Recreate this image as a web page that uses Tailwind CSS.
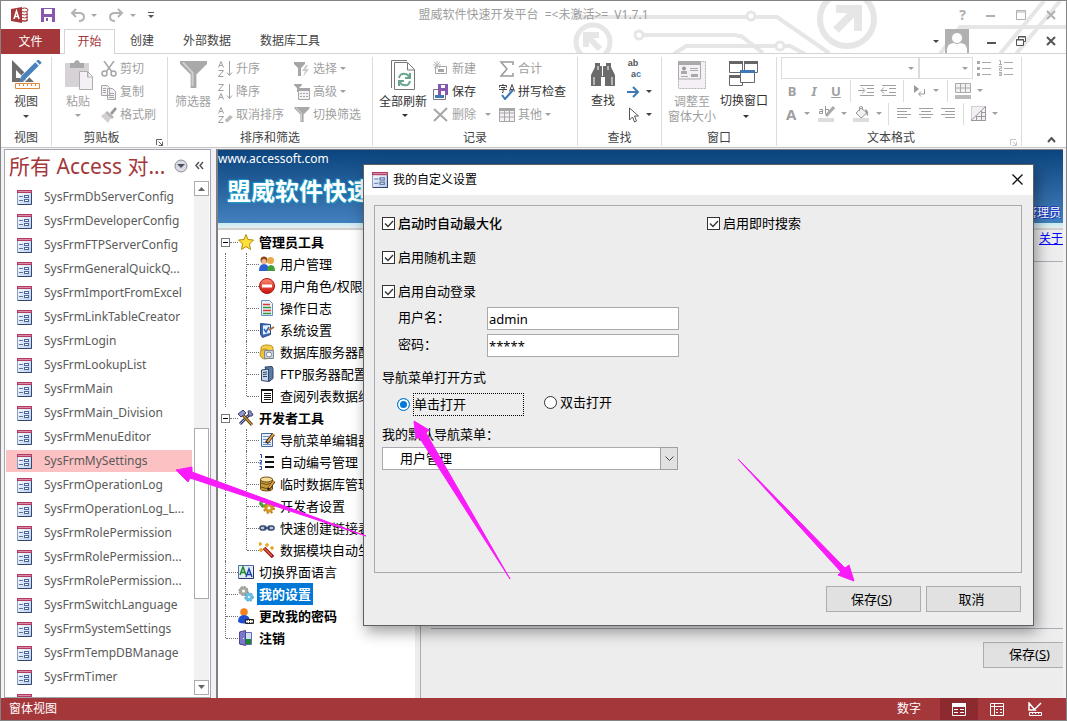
<!DOCTYPE html>
<html lang="zh-CN">
<head>
<meta charset="utf-8">
<title>盟威软件快速开发平台</title>
<script src="https://cdn.jsdelivr.net/npm/@tailwindcss/browser@4"></script>
</head>
<body class="relative flex h-screen flex-col overflow-hidden border border-[#848484] bg-white font-['Noto_Sans','Noto_Sans_CJK_SC',sans-serif] text-xs leading-4 text-[#444]">

<!-- shared symbols -->
<svg class="absolute h-0 w-0" aria-hidden="true">
  <defs>
    <linearGradient id="gForm" x1="0" y1="0" x2="1" y2="1"><stop offset="0" stop-color="#fff"/><stop offset="1" stop-color="#b9cdee"/></linearGradient>
    <linearGradient id="gRed" x1="0" y1="0" x2="0" y2="1"><stop offset="0" stop-color="#ff8a70"/><stop offset="1" stop-color="#c80f0a"/></linearGradient>
    <symbol id="form" viewBox="0 0 15 15"><rect x=".5" y=".5" width="14" height="14" fill="url(#gForm)" stroke="#8a9cc0"/><path d="M14.500 3v11.500H1" fill="none" stroke="#33476f"/><path d="M0 0h15v3H0z" fill="#b23c66"/><path d="M1 1h13v1H1z" fill="#dd8aa6"/><path d="M2 6.500h4M2 10.500h4" stroke="#5a76a8"/><rect x="7.500" y="5.500" width="4" height="2" fill="#fff" stroke="#4a679c"/><rect x="7.500" y="9.500" width="4" height="2" fill="#fff" stroke="#4a679c"/></symbol>
    <symbol id="caret" viewBox="0 0 6 3"><path d="M0 0h6L3 3z" fill="currentColor"/></symbol>
    <symbol id="lines" viewBox="0 0 14 13"><path d="M0 1.500h14M0 4.500h10M0 7.500h14M0 10.500h10" stroke="currentColor"/></symbol>
    <symbol id="funnel" viewBox="0 0 28 28"><path d="M0 0h28v3L17 14v14h-6V14L0 3z" fill="#a9a9a9"/><path d="M3 1.500 13 12v14" stroke="#cfcfcf" stroke-width="2" fill="none"/></symbol>
    <symbol id="launch" viewBox="0 0 8 8"><path d="M.5 7V.5H7M3 3l4 4M7.500 3v4.500H3" stroke="currentColor" fill="none"/></symbol>
  </defs>
</svg>

<header class="relative shrink-0">
  <!-- circuit decoration -->
  <svg class="absolute right-0 top-0 h-[52px] w-[500px]" viewBox="566 1 500 52" fill="none" stroke="#e6e6e6" stroke-width="4">
    <circle cx="593" cy="42" r="17" stroke-width="5"/><path d="M600 49 588 37M586 47V35h13" stroke-width="6"/>
    <circle cx="639" cy="35" r="4" stroke-width="3"/><path d="M644 35h93"/><path d="M574 17h173M755 17h22l52 36"/><circle cx="751" cy="16" r="4" stroke-width="3"/>
    <path d="M674 54l12-8h90"/><circle cx="780" cy="46" r="4" stroke-width="3"/><path d="M737 36h4l22 17M785 46h5l15 8"/>
    <circle cx="847" cy="19" r="27" stroke-width="6"/><path d="m836 30 20-20M836 9h22v22" stroke-width="8"/>
    <path d="M940 54l20-27h106M1000 54l44-53M1016 54l44-53"/>
  </svg>

  <!-- title row -->
  <div class="relative grid h-7 grid-cols-[1fr_auto_1fr] items-center">
    <div class="flex items-center pl-[10px] text-[#a6a6a6]">
      <svg class="mr-3 h-4 w-[18px]" viewBox="0 0 18 16"><path d="M10 2h6v12h-6z" fill="#fff" stroke="#a4373a"/><ellipse cx="13.500" cy="3" rx="3.500" ry="2" fill="#fff" stroke="#a4373a"/><path d="M10 7q3.500 2 7 0M10 10q3.500 2 7 0M10 13q3.500 2 7 0" stroke="#a4373a" fill="none"/><path d="M0 2l11-2v16L0 14z" fill="#a4373a"/><path d="M3 12l2.500-8L8 12M4 9.500h3" stroke="#fff" stroke-width="1.500" fill="none"/></svg>
      <button class="mr-[15px]" aria-label="保存"><svg class="h-[14px] w-[14px]" viewBox="0 0 14 14"><path d="M0 0h14v14H0z" fill="#8757b0"/><path d="M3 1h8v5H3zM3 9h8v5H3z" fill="#fff"/><path d="M5 10h2v3H5z" fill="#8757b0"/></svg></button>
      <button class="mr-2 flex items-center gap-[6px]" aria-label="撤消"><svg class="h-[14px] w-[15px]" viewBox="0 0 15 14" fill="none" stroke="#b3b3b3" stroke-width="2"><path d="M6 1 2 5l4 4M2 5h7q5 0 5 4t-5 4"/></svg><svg class="h-[3px] w-[6px]"><use href="#caret"/></svg></button>
      <button class="ml-1 mr-3 flex items-center gap-[6px]" aria-label="恢复"><svg class="h-[14px] w-[15px]" viewBox="0 0 15 14" fill="none" stroke="#b3b3b3" stroke-width="2"><path d="m9 1 4 4-4 4M13 5H6Q1 5 1 9t5 4"/></svg><svg class="h-[3px] w-[6px]"><use href="#caret"/></svg></button>
      <button aria-label="自定义快速访问工具栏"><svg class="h-[6px] w-[6px]" viewBox="0 0 6 6"><path d="M0 0h6v1H0zM0 3h6L3 6z" fill="#555"/></svg></button>
    </div>
    <h1 class="whitespace-pre text-xs text-[#9d9d9d]">盟威软件快速开发平台  =&lt;未激活&gt;=  V1.7.1</h1>
    <div class="flex items-center justify-end pr-[10px] text-[#b0b0b0]">
      <button class="mr-5 text-sm font-bold" aria-label="帮助">?</button>
      <button class="mr-5" aria-label="最小化"><svg class="h-3 w-[10px]" viewBox="0 0 10 12"><path d="M0 7h9" stroke="#b0b0b0" stroke-width="2"/></svg></button>
      <button class="mr-5" aria-label="最大化"><svg class="h-[10px] w-[10px]" viewBox="0 0 10 10"><path d="M.5.5h9v9h-9zM0 2h10" stroke="#b0b0b0" fill="none"/></svg></button>
      <button aria-label="关闭"><svg class="h-[10px] w-[10px]" viewBox="0 0 10 10"><path d="m1 1 8 8M9 1 1 9" stroke="#b0b0b0" stroke-width="2"/></svg></button>
    </div>
  </div>

  <!-- tab row -->
  <nav class="relative flex h-[25px] items-stretch border-b border-[#d4d4d4]">
    <button class="-mb-px w-[59px] bg-[#a4373a] text-white">文件</button>
    <button class="-mb-px ml-1 w-[51px] border border-b-0 border-[#d4d4d4] bg-white text-[#a4373a]">开始</button>
    <button class="ml-[15px]">创建</button>
    <button class="ml-[29px]">外部数据</button>
    <button class="ml-[29px]">数据库工具</button>
    <div class="ml-auto flex items-center pr-[10px]">
      <svg class="mr-[6px] h-[3px] w-[6px]"><use href="#caret"/></svg>
      <svg class="mr-[18px] h-6 w-6" viewBox="0 0 24 24"><path d="M0 0h24v24H0z" fill="#b1b1b1"/><path d="M2 24v-4q1-6 7-6h6q6 0 7 6v4z" fill="#fff"/><circle cx="12" cy="9" r="5.500" fill="#fff" stroke="#b1b1b1"/></svg>
      <button class="mr-5" aria-label="最小化窗体"><svg class="h-[10px] w-[9px]" viewBox="0 0 9 10"><path d="M0 7h9" stroke="#555" stroke-width="2"/></svg></button>
      <button class="mr-5" aria-label="还原窗体"><svg class="h-[10px] w-[10px]" viewBox="0 0 10 10" fill="none" stroke="#555"><path d="M2.500 3V.5h7v5H7M2 1h8M.5 3.500h7v6h-7zM0 4h8"/></svg></button>
      <button aria-label="关闭窗体"><svg class="h-[10px] w-[10px]" viewBox="0 0 10 10"><path d="m1 1 8 8M9 1 1 9" stroke="#555" stroke-width="2"/></svg></button>
    </div>
  </nav>
</header>

<!-- ribbon -->
<section class="flex h-[93px] shrink-0 items-stretch [&>div]:mb-px [&>div]:mt-[3px] [&>div]:flex [&>div]:shrink-0 [&>div]:flex-col [&>div]:gap-[3px] [&>div]:border-r [&>div]:border-[#dcdcdc]">
  <div class="w-[51px]">
    <button class="flex h-[70px] flex-col items-center gap-[5px] pt-[3px]">
      <svg class="ml-[2px] h-[29px] w-[30px]" viewBox="0 0 30 29"><path d="M0 0v22h22zM4 10l8 8H4z" fill="#6d6d6d" fill-rule="evenodd"/><path d="m10 20 17-18" stroke="#fff" stroke-width="7"/><path d="m11 18 14-14" stroke="#4a82bd" stroke-width="5"/><path d="m26 3 2-2" stroke="#4a82bd" stroke-width="5"/><path d="m8 22 1-6 5 4z" fill="#4a82bd"/><path d="M3.500 23.500h24v5h-24zM7.500 24v2M11.500 24v2M15.500 24v2M19.500 24v2M23.500 24v2" stroke="#e08a3c" fill="#fff"/></svg>
      <span>视图</span><svg class="h-[3px] w-[6px]"><use href="#caret"/></svg>
    </button><span class="text-center">视图</span>
  </div>

  <div class="w-[116px]">
    <div class="flex h-[70px] text-[#a0a0a0]">
      <button class="ml-3 flex w-7 flex-col items-center gap-1 pt-[3px]">
        <svg class="ml-px h-[30px] w-7 shrink-0" viewBox="0 0 28 30"><path d="M0 3h24v24H0z" fill="#d6d2d6"/><path d="M5 3h4q1-3 3-3t3 3h4v5H5z" fill="#a9a9a9"/><path d="M14.500 11.500h8l5 5v13h-13zM22.500 12v5h5" fill="#f4f0f5" stroke="#b0acb0"/></svg>
        <span class="whitespace-nowrap">粘贴</span><svg class="h-[3px] w-[6px]"><use href="#caret"/></svg>
      </button>
      <div class="ml-[9px] flex flex-col [&>button]:flex [&>button]:h-[23px] [&>button]:items-center [&>button]:gap-[3px] [&_svg]:h-4 [&_svg]:w-4">
        <button><svg viewBox="0 0 16 16" fill="none" stroke="#a6a6a6" stroke-width="1.500"><path d="m3 0 8 11M13 0 5 11"/><circle cx="3.500" cy="12.500" r="2.500"/><circle cx="12.500" cy="12.500" r="2.500"/></svg>剪切</button>
        <button><svg viewBox="0 0 16 16" fill="#f4f0f5" stroke="#a6a6a6"><path d="M.5 1.500h6l2 2v8h-8zM2 4.500h3M2 6.500h3M2 8.500h3M6.500 4.500h5l3 3v8h-8zM8 9.500h5M8 11.500h5M8 13.500h5"/></svg>复制</button>
        <button><svg viewBox="0 0 16 16"><path d="m9 6 5-6 2 2-5 6z" fill="#999"/><path d="m6 4 7 6-2 2-7-6z" fill="#b5b5b5"/><path d="m4 6 6 5-3 5-7-7z" fill="#d2ced2"/></svg>格式刷</button>
      </div>
    </div>
    <div class="relative text-center"><span class="pr-4">剪贴板</span><button class="absolute bottom-0 right-1" aria-label="剪贴板选项"><svg class="h-[7px] w-[7px]"><use href="#launch"/></svg></button></div>
  </div>

  <div class="w-[205px]">
    <div class="flex h-[70px] text-[#a0a0a0]">
      <button class="ml-[7px] flex w-9 flex-col items-center gap-[6px] pt-1"><svg class="h-[27px] w-[27px]"><use href="#funnel"/></svg><span class="whitespace-nowrap">筛选器</span></button>
      <div class="ml-[7px] flex w-[76px] flex-col [&>button]:flex [&>button]:h-[23px] [&>button]:items-center [&>button]:gap-[3px] [&>button]:whitespace-nowrap [&_svg]:h-4 [&_svg]:w-[15px] [&_svg]:shrink-0">
        <button><svg viewBox="0 0 15 16" fill="none" stroke="#a0a0a0"><path d="m.5 6.500 2.500-6 2.500 6M1.500 4.500h3M.5 9.500h5l-5 6h5M11.500 0v14M9 11.500l2.500 3 2.500-3"/></svg>升序</button>
        <button><svg viewBox="0 0 15 16" fill="none" stroke="#a0a0a0"><path d="m.5 15.500 2.500-6 2.500 6M1.500 13.500h3M.5.5h5l-5 6h5M11.500 0v14M9 11.500l2.500 3 2.500-3"/></svg>降序</button>
        <button><svg viewBox="0 0 15 16" fill="none" stroke="#a0a0a0"><path d="m.5 6.500 2.500-6 2.500 6M1.500 4.500h3M.5 9.500h5l-5 6h5"/><path d="m7 13 5-5 3 2-5 5H8z" fill="#bbb" stroke="none"/></svg>取消排序</button>
      </div>
      <div class="flex flex-col [&>button]:flex [&>button]:h-[23px] [&>button]:items-center [&>button]:gap-[3px] [&>button]:whitespace-nowrap">
        <button><svg class="h-4 w-4" viewBox="0 0 16 16"><path d="M0 1h11v2L7 7v8H4V7L0 3z" fill="#a6a6a6"/><path d="m12 4-4 6h3l-2 6 6-8h-3l2-4z" fill="#ccc"/></svg>选择<svg class="h-[3px] w-[6px]"><use href="#caret"/></svg></button>
        <button><svg class="h-4 w-4" viewBox="0 0 16 16"><path d="M0 0h8v1L5 4v4H3V4L0 1z" fill="#a6a6a6"/><path d="M4.500 4.500h11v11h-11z" fill="#f4f0f5" stroke="#a6a6a6"/><path d="M5 4h11v3H5z" fill="#a6a6a6"/><path d="M6 9.500h8M6 12.500h8" stroke="#a6a6a6" stroke-dasharray="2 1"/></svg>高级<svg class="h-[3px] w-[6px]"><use href="#caret"/></svg></button>
        <button><svg class="h-[15px] w-4"><use href="#funnel"/></svg>切换筛选</button>
      </div>
    </div>
    <span class="text-center">排序和筛选</span>
  </div>

  <div class="w-[205px]">
    <div class="flex h-[70px] text-[#a0a0a0]">
      <button class="ml-[6px] flex w-12 flex-col items-center gap-1 pt-[3px] text-[#333]">
        <svg class="h-[30px] w-6 shrink-0" viewBox="0 0 24 30"><path d="M.5 28V.5H16" stroke="#777" fill="none"/><path d="M3.500 2.500h13l7 7v20h-20zM16.500 3v7h7" stroke="#777" fill="#fff"/><path d="M8 18q1-5 6-4 3 0 4 3M19 13v5h-5M19 21q-1 5-6 4-3 0-4-3M8 26v-5h5" stroke="#6aa58e" stroke-width="2" fill="none"/></svg>
        <span class="whitespace-nowrap">全部刷新</span><svg class="ml-1 h-[3px] w-[6px]"><use href="#caret"/></svg>
      </button>
      <div class="ml-[6px] flex w-[66px] flex-col [&>button]:flex [&>button]:h-[23px] [&>button]:items-center [&>button]:gap-[3px]">
        <button><svg class="h-4 w-4" viewBox="0 0 16 16"><path d="M2.500 5.500h11v7h-11z" fill="#fff" stroke="#a6a6a6"/><path d="M5 8h6v3H5z" fill="#a6a6a6"/><path d="M4 0v8M0 4h8M1 1l6 6M7 1 1 7" stroke="#bbb"/></svg>新建</button>
        <button class="text-[#333]"><svg class="h-4 w-4" viewBox="0 0 16 16"><path d="M.5 5.500h12v10H.5z" fill="#fff" stroke="#777"/><path d="M2 11h9v3H2z" fill="#3f78b5"/><path d="M5 0h10v11H5z" fill="#8757b0"/><path d="M8 1h4v3H8zM8 7h4v4H8z" fill="#fff"/></svg>保存</button>
        <button><svg class="h-4 w-4" viewBox="0 0 16 16"><path d="m1 2 13 12M14 1 1 14" stroke="#a6a6a6" stroke-width="2"/></svg>删除<svg class="ml-[6px] h-[3px] w-[6px]"><use href="#caret"/></svg></button>
      </div>
      <div class="flex flex-col [&>button]:flex [&>button]:h-[23px] [&>button]:items-center [&>button]:gap-[3px] [&>button]:whitespace-nowrap">
        <button><svg class="h-4 w-4" viewBox="0 0 16 16"><path d="M14 4V1H2l6 7-6 7h12v-3" stroke="#999" stroke-width="1.500" fill="none"/></svg>合计</button>
        <button class="text-[#333]"><svg class="h-4 w-4" viewBox="0 0 16 16" fill="none" stroke="#444"><path d="M4 0v1M.5 3.500v-2h7v2M2 3.500h4l-2 2v3H3M0 5.500h8M10.500 7.500 13 .5l2.500 7M11 5.500h4"/><path d="m3 11 3 4 8-9" stroke="#3f78b5" stroke-width="2"/></svg>拼写检查</button>
        <button><svg class="h-4 w-4" viewBox="0 0 16 16"><path d="M.5 1.500h15v13H.5zM0 6h16M0 10h16M5.500 2v12M10.500 2v12" fill="#f4f0f5" stroke="#a6a6a6"/><path d="M0 1h16v3H0z" fill="#a6a6a6"/></svg>其他<svg class="h-[3px] w-[6px]"><use href="#caret"/></svg></button>
      </div>
    </div>
    <span class="text-center">记录</span>
  </div>

  <div class="w-[84px]">
    <div class="flex h-[70px]">
      <button class="ml-3 flex w-[26px] flex-col items-center gap-[6px] pt-[6px] text-[#333]">
        <svg class="h-6 w-[26px]" viewBox="0 0 26 24"><path d="M5 0h5v3h6V0h5v4l4 8v11H15v-9h-4v9H1V12l4-8z" fill="#6b6b6b"/><path d="M4 14v8M12.500 3v10M22 14v8M8 3v4M18 3v4" stroke="#fff"/></svg>
        <span class="whitespace-nowrap">查找</span>
      </button>
      <div class="ml-[9px] flex flex-col [&>button]:flex [&>button]:h-[23px] [&>button]:items-center [&>button]:gap-[5px]">
        <button aria-label="替换"><span class="flex flex-col font-['Liberation_Sans',sans-serif] text-[9px] font-bold leading-[11px] text-[#555]"><span>ab</span><span class="pl-[6px]">a<span class="text-[#3f78b5]">c</span></span></span></button>
        <button aria-label="转至"><svg class="h-3 w-4" viewBox="0 0 16 12"><path d="M2 6h10M8 1l5 5-5 5" stroke="#3f78b5" stroke-width="2" fill="none"/></svg><svg class="h-[3px] w-[6px]"><use href="#caret"/></svg></button>
        <button aria-label="选择"><svg class="h-4 w-4" viewBox="0 0 16 16"><path d="M4.500 1v12l3-3 2 5 2-1-2-5h4z" fill="#fff" stroke="#555"/></svg><svg class="h-[3px] w-[6px]"><use href="#caret"/></svg></button>
      </div>
    </div>
    <span class="text-center">查找</span>
  </div>

  <div class="w-[115px]">
    <div class="flex h-[70px]">
      <button class="ml-[6px] flex w-12 flex-col items-center gap-[5px] pt-1 text-[#a0a0a0]">
        <svg class="h-7 w-7 shrink-0" viewBox="0 0 28 28"><path d="M.5.5h27v27H.5z" fill="#f4f0f5" stroke="#b5b0b5" stroke-dasharray="2 1"/><path d="M.5 1h22v17H.5z" fill="#f4f0f5" stroke="#aaa"/><path d="M0 0h23v4H0z" fill="#aaa"/><circle cx="6" cy="7.500" r="2" fill="#999"/><path d="M3 13v-3h6v3zM12 7h8v1h-8zM12 9h8v1h-8zM3 15h7v1H3zM13 13h7v3h-7z" fill="#aaa"/></svg>
        <span class="whitespace-nowrap text-center leading-[15px]">调整至<br>窗体大小</span>
      </button>
      <button class="ml-1 flex w-12 flex-col items-center gap-[6px] pt-1 text-[#333]">
        <svg class="h-[26px] w-[30px]" viewBox="0 0 30 26" fill="#fff" stroke="#666"><path d="M.5.5h13v11H.5zM15.500.5h13v11h-13zM.5 14.500h13v10H.5z"/><path d="M0 1.500h14M15 1.500h14M0 15.500h14" stroke-width="3"/><path d="M11.500 9.500h14v12h-14z"/><path d="M11 10.500h15" stroke="#3f78b5" stroke-width="3"/></svg>
        <span class="whitespace-nowrap">切换窗口</span><svg class="ml-1 h-[3px] w-[6px]"><use href="#caret"/></svg>
      </button>
    </div>
    <span class="text-center">窗口</span>
  </div>

  <div class="w-[245px] text-[#a0a0a0]">
    <div class="flex h-[70px] flex-col pl-1">
      <div class="flex h-[22px] items-center">
        <label class="relative flex h-[22px] w-[138px] items-center border border-[#dcdcdc]"><select class="h-full w-full appearance-none" aria-label="字体"></select><svg class="absolute right-[4px] h-[3px] w-[6px]"><use href="#caret"/></svg></label>
        <label class="relative flex h-[22px] w-[54px] items-center border border-[#dcdcdc]"><select class="h-full w-full appearance-none" aria-label="字号"></select><svg class="absolute right-[4px] h-[3px] w-[6px]"><use href="#caret"/></svg></label>
        <button class="ml-1" aria-label="项目符号"><svg class="h-4 w-[14px]" viewBox="0 0 14 16"><path d="M0 1h3v3H0zM0 7h3v3H0zM0 13h3v3H0z" fill="#aaa"/><path d="M5 2.500h9M5 8.500h9M5 14.500h9" stroke="#aaa"/></svg></button>
        <button class="ml-2" aria-label="编号"><svg class="h-4 w-[14px]" viewBox="0 0 14 16"><path d="M0 .5h1.500V4M0 4.500h3M0 6.500h2.500v2H.5v2H3M0 12.500h2.500v3H0M0 14h2.500M5 2.500h9M5 8.500h9M5 14.500h9" stroke="#aaa" fill="none"/></svg></button>
      </div>
      <div class="flex h-[23px] items-center">
        <button class="w-[22px] text-[13px] font-bold">B</button><button class="w-[22px] text-[13px] font-bold italic">I</button><button class="w-[22px] text-[13px] font-bold underline">U</button>
        <i class="ml-[3px] h-[22px] border-l border-[#dcdcdc]"></i>
        <button class="ml-[7px]" aria-label="增加缩进"><svg class="h-[13px] w-4" viewBox="0 0 16 13" stroke="#a0a0a0" fill="none"><path d="M0 6.500h6M4 3.500l3 3-3 3M2 1.500h14M9 4.500h7M9 8.500h7M2 11.500h14"/></svg></button>
        <button class="ml-[6px]" aria-label="减少缩进"><svg class="h-[13px] w-4" viewBox="0 0 16 13" stroke="#a0a0a0" fill="none"><path d="M1 6.500h6M4 3.500l-3 3 3 3M2 1.500h14M9 4.500h7M9 8.500h7M2 11.500h14"/></svg></button>
        <i class="ml-[7px] h-[22px] border-l border-[#dcdcdc]"></i>
        <button class="ml-[9px] flex items-center gap-2" aria-label="从左到右"><svg class="h-3 w-3" viewBox="0 0 12 12"><path d="m1 0 5 4-5 4z" fill="#999"/><path d="M11.500 4v5H6M8 6.500 5.500 9 8 11.500" stroke="#999" fill="none"/></svg><svg class="h-[3px] w-[6px]"><use href="#caret"/></svg></button>
        <i class="ml-2 h-[22px] border-l border-[#dcdcdc]"></i>
        <button class="ml-[7px] flex items-center gap-[6px]" aria-label="网格线"><svg class="h-4 w-4" viewBox="0 0 16 16"><path d="M.5.5h15v9H.5zM0 5h16M5.500 0v10M10.500 0v10" fill="#f4eef5" stroke="#aaa"/><path d="M0 12h16v4H0z" fill="#bbb"/></svg><svg class="h-[3px] w-[6px]"><use href="#caret"/></svg></button>
      </div>
      <div class="flex h-[23px] items-center">
        <button class="ml-[5px] flex items-center gap-2 text-[15px] font-bold leading-4">A<svg class="h-[3px] w-[6px]"><use href="#caret"/></svg></button>
        <button class="ml-2 flex items-center gap-[6px]" aria-label="突出显示"><svg class="h-4 w-[17px]" viewBox="0 0 17 16"><path d="M1.500 3.500h3v4h-3V5.500h3M7.500 0v7.500h3v-4h-3" stroke="#999" fill="none"/><path d="m16 1-8 9" stroke="#aaa" stroke-width="3"/><path d="M0 12h16v4H0z" fill="#ddd"/></svg><svg class="h-[3px] w-[6px]"><use href="#caret"/></svg></button>
        <button class="ml-[6px] flex items-center gap-[6px]" aria-label="背景色"><svg class="h-4 w-[17px]" viewBox="0 0 17 16"><path d="m8 2 6 5-6 5-5-5z" fill="#f4eef5" stroke="#999"/><path d="M6.500 5V1q1-1 3 0v3" stroke="#999" fill="none"/><path d="M12 3q4 1 3 7-2-1-3-7z" fill="#999"/><path d="M0 12h16v4H0z" fill="#ddd"/></svg><svg class="h-[3px] w-[6px]"><use href="#caret"/></svg></button>
        <i class="ml-[6px] h-[22px] border-l border-[#dcdcdc]"></i>
        <button class="ml-2" aria-label="左对齐"><svg class="h-[13px] w-[14px]"><use href="#lines"/></svg></button>
        <button class="ml-2" aria-label="居中"><svg class="h-[13px] w-[14px]" viewBox="0 0 14 13"><path d="M0 1.500h14M2 4.500h10M0 7.500h14M2 10.500h10" stroke="currentColor"/></svg></button>
        <button class="ml-2" aria-label="右对齐"><svg class="h-[13px] w-[14px]" viewBox="0 0 14 13"><path d="M0 1.500h14M4 4.500h10M0 7.500h14M4 10.500h10" stroke="currentColor"/></svg></button>
        <i class="ml-2 h-[22px] border-l border-[#dcdcdc]"></i>
        <button class="ml-[7px] flex items-center gap-[6px]" aria-label="可选行颜色"><svg class="h-[15px] w-[15px]" viewBox="0 0 15 15"><path d="M.5.5h14v14H.5z" fill="#f4eef5" stroke="#aaa" stroke-dasharray="1 1"/><path d="M14.500 0v14.500H0L14 1M10.500 5v9M5.500 10v4M5 10.500h9M10 6.500h4" stroke="#999" fill="none"/></svg><svg class="h-[3px] w-[6px]"><use href="#caret"/></svg></button>
      </div>
    </div>
    <div class="relative text-center text-[#444]"><span class="pr-4">文本格式</span><button class="absolute bottom-0 right-1 text-[#bbb]" aria-label="文本格式选项"><svg class="h-[7px] w-[7px]"><use href="#launch"/></svg></button></div>
  </div>
  <button class="ml-auto mr-[10px] self-end pb-1" aria-label="折叠功能区"><svg class="h-[6px] w-[9px]" viewBox="0 0 9 6"><path d="m1 5 3.500-4L8 5" stroke="#555" stroke-width="2" fill="none"/></svg></button>
</section>

<!-- workspace -->
<main class="relative flex min-h-0 flex-1 border-t border-[#c6c6c6] bg-[#f3f1f3] pl-[3px]">
  <aside class="mt-px flex w-[207px] shrink-0 flex-col border border-[#a3a7b2] bg-white">
    <div class="flex h-[31px] shrink-0 items-center pl-1">
      <h2 class="w-[163px] whitespace-nowrap text-[21px] leading-7 text-[#a4373a]">所有 Access 对...</h2>
      <svg class="ml-[2px] h-[14px] w-[14px]" viewBox="0 0 14 14"><circle cx="7" cy="7" r="6" fill="#d9dae4" stroke="#8b8e98"/><path d="M3 5h8L7 9z" fill="#4c5060"/></svg>
      <button class="ml-[7px]" aria-label="百叶窗开/关"><svg class="h-[9px] w-[9px]" viewBox="0 0 9 9"><path d="m4 1-3 3.500L4 8M8 1 5 4.500 8 8" stroke="#555" stroke-width="1.500" fill="none"/></svg></button>
    </div>
    <div class="flex min-h-0 flex-1">
      <ul class="ml-px flex-1 overflow-hidden pt-1 text-xs leading-[22px] text-[#5a5a5a] [&>li]:flex [&>li]:h-6 [&>li]:items-center [&>li]:gap-3 [&>li]:border-y [&>li]:border-white [&>li]:pl-[11px] [&>li]:whitespace-nowrap [&_svg]:h-[15px] [&_svg]:w-[15px] [&_svg]:shrink-0">
        <li><svg><use href="#form"/></svg>SysFrmDbServerConfig</li>
        <li><svg><use href="#form"/></svg>SysFrmDeveloperConfig</li>
        <li><svg><use href="#form"/></svg>SysFrmFTPServerConfig</li>
        <li><svg><use href="#form"/></svg>SysFrmGeneralQuickQ...</li>
        <li><svg><use href="#form"/></svg>SysFrmImportFromExcel</li>
        <li><svg><use href="#form"/></svg>SysFrmLinkTableCreator</li>
        <li><svg><use href="#form"/></svg>SysFrmLogin</li>
        <li><svg><use href="#form"/></svg>SysFrmLookupList</li>
        <li><svg><use href="#form"/></svg>SysFrmMain</li>
        <li><svg><use href="#form"/></svg>SysFrmMain_Division</li>
        <li><svg><use href="#form"/></svg>SysFrmMenuEditor</li>
        <li class="bg-[#fcc1c2]"><svg><use href="#form"/></svg>SysFrmMySettings</li>
        <li><svg><use href="#form"/></svg>SysFrmOperationLog</li>
        <li><svg><use href="#form"/></svg>SysFrmOperationLog_L...</li>
        <li><svg><use href="#form"/></svg>SysFrmRolePermission</li>
        <li><svg><use href="#form"/></svg>SysFrmRolePermission...</li>
        <li><svg><use href="#form"/></svg>SysFrmRolePermission...</li>
        <li><svg><use href="#form"/></svg>SysFrmSwitchLanguage</li>
        <li><svg><use href="#form"/></svg>SysFrmSystemSettings</li>
        <li><svg><use href="#form"/></svg>SysFrmTempDBManage</li>
        <li><svg><use href="#form"/></svg>SysFrmTimer</li>
        <li><svg><use href="#form"/></svg></li>
      </ul>
      <div class="mb-[2px] ml-[2px] mr-px flex w-[15px] shrink-0 flex-col bg-[#f1f1f1]">
        <button class="flex h-[15px] shrink-0 items-center justify-center border border-[#ababab] bg-white" aria-label="向上滚动"><svg class="h-1 w-[7px]" viewBox="0 0 7 4"><path d="M0 4h7L3.500 0z" fill="#666"/></svg></button>
        <div class="flex-[232]"></div>
        <div class="flex-[170] border border-[#ababab] bg-white"></div>
        <div class="flex-[81]"></div>
        <button class="flex h-[15px] shrink-0 items-center justify-center border border-[#ababab] bg-white" aria-label="向下滚动"><svg class="h-1 w-[7px]" viewBox="0 0 7 4"><path d="M0 0h7L3.500 4z" fill="#666"/></svg></button>
      </div>
    </div>
  </aside>

  <!-- open form -->
  <section class="ml-[5px] mr-[3px] mt-px flex min-w-0 flex-1 flex-col border-l-2 border-t border-[#808080] bg-[#ededed]">
    <div class="flex h-[73px] shrink-0 flex-col bg-linear-to-b from-[#0a457f] to-[#4280bd] pt-px text-white">
      <span class="leading-4">www.accessoft.com</span>
      <strong class="pl-[9px] pt-2 text-2xl leading-8 text-shadow-[1px_1px_1px_#1aa3c9,-1px_-1px_1px_#1a93c9]">盟威软件快速</strong>
      <span class="-mt-[2px] pr-[2px] text-right leading-4 text-shadow-[1px_1px_0px_#1c34c8,-1px_-1px_0px_#1c34c8]">管理员</span>
    </div>
    <div class="h-[7px] shrink-0 border-b-2 border-[#d0d0d0] bg-linear-to-b from-[#c4ecf4] to-[#e8eef0]"></div>
    <div class="flex min-h-0 flex-1">
      <ul class="w-[197px] shrink-0 bg-white pl-[7px] pt-px text-[13px] text-black [&>li]:flex [&>li]:h-[22px] [&>li]:items-center [&>li]:whitespace-nowrap [&_i]:border-dotted [&_i]:border-[#707070] [&_svg]:h-4 [&_svg]:w-4 [&_svg]:shrink-0">
        <li class="font-bold"><span class="-ml-1 flex h-[9px] w-[9px] items-center justify-center border border-[#777] bg-white"><b class="h-px w-[5px] bg-black"></b></span><i class="w-2 border-t"></i><svg viewBox="0 0 16 16"><path d="m8 .5 2 5 5.500.5-4 4 1 5.500L8 12.500 3.500 15.500l1-5.500-4-4L6 5.500z" fill="#ffdf3a" stroke="#b48a10"/></svg><span class="ml-[5px]">管理员工具</span></li>
        <li><i class="h-full w-[21px] border-l"></i><i class="h-full w-px border-l"></i><i class="w-3 border-t"></i><svg viewBox="0 0 16 16"><circle cx="5" cy="4" r="3.500" fill="#8a4a20"/><circle cx="11.500" cy="4.500" r="3.500" fill="#e9a84c"/><circle cx="5" cy="5.500" r="2.500" fill="#f0b890"/><path d="M0 15q0-7 5-7t5 7z" fill="#2c5fd0"/><path d="M8 15q0-6 4-6t4 6z" fill="#3fa03a"/></svg><span class="ml-[5px]">用户管理</span></li>
        <li><i class="h-full w-[21px] border-l"></i><i class="h-full w-px border-l"></i><i class="w-3 border-t"></i><svg viewBox="0 0 16 16"><circle cx="8" cy="8" r="7.500" fill="url(#gRed)" stroke="#b01010"/><path d="M3 6.500h10v3H3z" fill="#fff"/></svg><span class="ml-[5px]">用户角色/权限</span></li>
        <li><i class="h-full w-[21px] border-l"></i><i class="h-full w-px border-l"></i><i class="w-3 border-t"></i><svg viewBox="0 0 16 16"><path d="M2.500.5h8l3 3v12h-11z" fill="#e8f1fc" stroke="#6f8fc0"/><path d="M4 4.500h7M4 10.500h8" stroke="#d83a2a" stroke-width="1.500"/><path d="M4 7.500h8M4 13.500h8" stroke="#2a9a3a" stroke-width="1.500"/></svg><span class="ml-[5px]">操作日志</span></li>
        <li><i class="h-full w-[21px] border-l"></i><i class="h-full w-px border-l"></i><i class="w-3 border-t"></i><svg viewBox="0 0 16 16"><path d="m1.500 1.500 10 1v10l-8 3-2-3z" fill="#3e6ab0" stroke="#27488a"/><path d="m4 3.500 7-.5v8l-7 1.500z" fill="#e8f1fc"/><path d="m5 7 2 3 3-5" stroke="#2b68c0" stroke-width="1.500" fill="none"/><path d="m10 8 5-3" stroke="#b0682a" stroke-width="2"/></svg><span class="ml-[5px]">系统设置</span></li>
        <li><i class="h-full w-[21px] border-l"></i><i class="h-full w-px border-l"></i><i class="w-3 border-t"></i><svg viewBox="0 0 16 16"><path d="M2 4q0-3 6-3t6 3v4H2z" fill="#f5cd4a" stroke="#b98f1c"/><circle cx="6" cy="10" r="5" fill="#f0c040" stroke="#b98f1c"/><path d="M5.500 6.500h9v8h-9z" fill="#c9d2da" stroke="#7c8792"/><circle cx="10" cy="10.500" r="2.500" fill="#fff" stroke="#7c8792"/></svg><span class="ml-[5px]">数据库服务器配</span></li>
        <li><i class="h-full w-[21px] border-l"></i><i class="h-full w-px border-l"></i><i class="w-3 border-t"></i><svg viewBox="0 0 16 16"><path d="m6 1 7-.5 1 2v10l-4 3z" fill="#5c7ba5" stroke="#2e4568"/><path d="m2.500 4 7-1v12.500l-7-1z" fill="#c7d6ea" stroke="#2e4568"/><path d="m4 6.500 4-.5M4 8.500l4-.5M4 10.500h4" stroke="#2e4568"/></svg><span class="ml-[5px]">FTP服务器配置</span></li>
        <li><i class="h-full w-[21px] border-l"></i><i class="h-[11px] w-px self-start border-l"></i><i class="w-3 border-t"></i><svg viewBox="0 0 16 16"><path d="M2.500 1.500h11v13h-11z" fill="#fff" stroke="#111"/><path d="M2 2h12" stroke="#111" stroke-width="2"/><path d="M5 5.500h7M5 7.500h7M5 9.500h7M5 11.500h7" stroke="#111"/></svg><span class="ml-[5px]">查阅列表数据维</span></li>
        <li class="font-bold"><span class="-ml-1 flex h-[9px] w-[9px] items-center justify-center border border-[#777] bg-white"><b class="h-px w-[5px] bg-black"></b></span><i class="w-2 border-t"></i><svg viewBox="0 0 16 16"><path d="m2 14 9-9" stroke="#3a3a66" stroke-width="3"/><path d="m2 14 9-9" stroke="#aab4e0"/><path d="M10 1q4-1 3 2l2 1q0 3-4 2z" fill="#8e9ad0" stroke="#3a3a66"/><path d="m5 5 9 10" stroke="#6d4a10" stroke-width="3"/><path d="m5 5 9 10" stroke="#eac25a"/><path d="m0 4 5-4 3 3-5 4z" fill="#8e9ad0" stroke="#3a3a66"/></svg><span class="ml-[5px]">开发者工具</span></li>
        <li><i class="h-full w-[21px] border-l"></i><i class="h-full w-px border-l"></i><i class="w-3 border-t"></i><svg viewBox="0 0 16 16"><path d="M2.500 1.500h11v13h-11z" fill="#e6eefa" stroke="#4a6aa0"/><path d="M4 4.500h6M4 7.500h6M4 10.500h8M4 12.500h8" stroke="#6f8fc0"/><path d="m14.500 2-7 9" stroke="#222" stroke-width="3.500"/><path d="m14.500 2-6 8" stroke="#f0a030" stroke-width="2"/></svg><span class="ml-[5px]">导航菜单编辑器</span></li>
        <li><i class="h-full w-[21px] border-l"></i><i class="h-full w-px border-l"></i><i class="w-3 border-t"></i><svg viewBox="0 0 16 16"><path d="M6 3h9M6 8h9M6 13h9" stroke="#111" stroke-width="2"/><path d="M1 .5h1.500V4M.5 6.500h2v2H1v1.500h2M.5 12.500h2v3h-2" stroke="#2344b0" fill="none"/></svg><span class="ml-[5px]">自动编号管理</span></li>
        <li><i class="h-full w-[21px] border-l"></i><i class="h-full w-px border-l"></i><i class="w-3 border-t"></i><svg viewBox="0 0 16 16"><path d="M1.500 3v10q0 2 6 2t6-2V3z" fill="#c89a3e" stroke="#6d4d12"/><ellipse cx="7.500" cy="3.500" rx="6" ry="2.500" fill="#f4dc98" stroke="#6d4d12"/><path d="M2 7q5 3 11 0M2 11q5 3 11 0" stroke="#6d4d12" fill="none"/><path d="m15 5-6 9" stroke="#222" stroke-width="3"/><path d="m15 5-5 7" stroke="#f0a030" stroke-width="2"/></svg><span class="ml-[5px]">临时数据库管理</span></li>
        <li><i class="h-full w-[21px] border-l"></i><i class="h-full w-px border-l"></i><i class="w-3 border-t"></i><svg viewBox="0 0 16 16" fill="none"><circle cx="5" cy="5" r="3" stroke="#4aa03c" stroke-width="3"/><circle cx="5" cy="5" r="4.500" stroke="#4aa03c" stroke-dasharray="2 2"/><circle cx="10" cy="10" r="3" stroke="#d29a28" stroke-width="3"/><circle cx="10" cy="10" r="5" stroke="#b98218" stroke-width="2" stroke-dasharray="2 2"/></svg><span class="ml-[5px]">开发者设置</span></li>
        <li><i class="h-full w-[21px] border-l"></i><i class="h-full w-px border-l"></i><i class="w-3 border-t"></i><svg viewBox="0 0 16 16" fill="none" stroke="#34466e" stroke-width="1.500"><rect x="1" y="6" width="6" height="4" rx="2" fill="#b9c8e6"/><rect x="9" y="6" width="6" height="4" rx="2" fill="#b9c8e6"/><path d="M5 8h6"/></svg><span class="ml-[5px]">快速创建链接表</span></li>
        <li><i class="h-full w-[21px] border-l"></i><i class="h-[11px] w-px self-start border-l"></i><i class="w-3 border-t"></i><svg viewBox="0 0 16 16"><path d="m5 6 9 9" stroke="#8c1410" stroke-width="3.500"/><path d="m5 6 8 8" stroke="#f0604a" stroke-width="1.500"/><path d="M1 0v4M-1 2h4M8 1v4M6 3h4M13 4v4M11 6h4M2 6v4M0 8h4" stroke="#e6a51c" stroke-width="1.500"/></svg><span class="ml-[5px]">数据模块自动生</span></li>
        <li><i class="h-full w-px border-l"></i><i class="w-3 border-t"></i><svg viewBox="0 0 16 16"><path d="M.5 1.500h15v13H.5z" fill="#e4ecf8" stroke="#5670a0"/><path d="M15.500 2v12.500H1" stroke="#22366a" fill="none"/><path d="m2 11 3-8 3 8M3 8.500h4" stroke="#1c8a2c" stroke-width="1.500" fill="none"/><path d="m8 13 3-8 3 8M9 10.500h4" stroke="#2344b0" stroke-width="1.500" fill="none"/></svg><span class="ml-[5px]">切换界面语言</span></li>
        <li><i class="h-full w-px border-l"></i><i class="w-3 border-t"></i><svg viewBox="0 0 16 16" fill="none"><circle cx="5.500" cy="5" r="3" stroke="#a8a8a0" stroke-width="3"/><circle cx="5.500" cy="5" r="4.500" stroke="#8a8a84" stroke-dasharray="2 1.500"/><circle cx="11" cy="11" r="2.500" stroke="#6cc0e8" stroke-width="3"/><circle cx="11" cy="11" r="4.200" stroke="#3a8cc0" stroke-dasharray="2 1.500"/></svg><span class="ml-[3px] bg-[#0078d7] px-[2px] font-bold leading-[22px] text-white">我的设置</span></li>
        <li class="font-bold"><i class="h-full w-px border-l"></i><i class="w-3 border-t"></i><svg viewBox="0 0 16 16"><circle cx="6" cy="4" r="3.800" fill="#f58220"/><path d="M0 14q0-7 6-7t6 7q-6 3-12 0z" fill="#1f4fd0"/><path d="M7.500 11.500h8v4h-8z" fill="#fff" stroke="#222"/><path d="M9 12v3M11.500 12v3M14 12v3" stroke="#222" stroke-dasharray="1 1"/></svg><span class="ml-[5px]">更改我的密码</span></li>
        <li class="font-bold"><i class="h-[11px] w-px self-start border-l"></i><i class="w-3 border-t"></i><svg viewBox="0 0 16 16"><path d="M2.500 2.500h11v12h-11z" fill="#cfe0f4" stroke="#6a6ab0"/><path d="M8 9h5v5H8z" fill="#1c8a2c"/><path d="m1.500 2 6-1.500v15l-6-1.500z" fill="#7a78c8" stroke="#4a4890"/><path d="M5 8h1v1H5z" fill="#fff"/></svg><span class="ml-[5px]">注销</span></li>
      </ul>
      <div class="ml-[5px] flex min-w-0 flex-1 flex-col items-end border-l border-[#a9acb4]">
        <a href="#" class="pt-px leading-4 text-[#00f] underline">关于</a>
        <div class="ml-[10px] mt-[14px] flex-1 self-stretch border-y border-[#a9acb4]"></div>
        <button class="mb-[30px] mt-[13px] h-[26px] w-20 border border-r-0 border-[#adadad] bg-[#e1e1e1] pb-[2px] pl-3 text-[13px] text-black">保存(<u>S</u>)</button>
      </div>
    </div>
  </section>

  <!-- settings dialog -->
  <form class="absolute bottom-[72px] left-[362px] right-[32px] top-4 flex flex-col border border-[#5c5f64] bg-[#ededed] text-[13px] leading-5 text-black shadow-[3px_6px_14px_rgba(0,0,0,0.38)]">
    <div class="flex h-[30px] shrink-0 items-center bg-white pb-px pl-2 pr-[10px] text-xs"><svg class="mr-[5px] h-4 w-4" viewBox="0 0 15 15"><use href="#form"/></svg>我的自定义设置
      <button type="button" class="ml-auto" aria-label="关闭"><svg class="h-[11px] w-[11px]" viewBox="0 0 11 11"><path d="m.5.5 10 10M10.500.5l-10 10" stroke="#111" stroke-width="1.300"/></svg></button>
    </div>
    <div class="ml-[10px] mr-[11px] mt-[10px] flex flex-1 flex-col border border-[#a9a9ae] px-[7px] pt-[7px]">
      <div class="grid grid-cols-2 gap-y-[14px] [&_input]:h-[13px] [&_input]:w-[13px] [&_input]:appearance-none [&_input]:border [&_input]:border-[#333] [&_input]:bg-white [&_label]:flex [&_label]:items-center [&_label]:gap-[3px] [&_span]:relative [&_span]:flex [&_svg]:absolute [&_svg]:left-[2px] [&_svg]:top-[3px] [&_svg]:h-2 [&_svg]:w-[10px]">
        <label class="font-medium"><span><input type="checkbox" checked><svg viewBox="0 0 10 8"><path d="m1 3.500 3 3L9 1" stroke="#333" stroke-width="1.300" fill="none"/></svg></span>启动时自动最大化</label>
        <label class="pl-[9px]"><span><input type="checkbox" checked><svg viewBox="0 0 10 8"><path d="m1 3.500 3 3L9 1" stroke="#333" stroke-width="1.300" fill="none"/></svg></span>启用即时搜索</label>
        <label class="col-span-2"><span><input type="checkbox" checked><svg viewBox="0 0 10 8"><path d="m1 3.500 3 3L9 1" stroke="#333" stroke-width="1.300" fill="none"/></svg></span>启用随机主题</label>
        <label class="col-span-2"><span><input type="checkbox" checked><svg viewBox="0 0 10 8"><path d="m1 3.500 3 3L9 1" stroke="#333" stroke-width="1.300" fill="none"/></svg></span>启用自动登录</label>
      </div>
      <div class="mt-[6px] grid grid-cols-[89px_192px] gap-y-1 pl-4 [&_input]:h-[23px] [&_input]:border [&_input]:border-[#a9a9ae] [&_input]:bg-white [&_input]:px-px">
        <label for="user">用户名：</label><input id="user" value="admin">
        <label for="pwd">密码：</label><input id="pwd" value="*****">
      </div>
      <fieldset class="mt-[10px]">
        <legend>导航菜单打开方式</legend>
        <div class="mt-[5px] flex items-center pl-[15px]">
          <label class="flex items-center gap-[3px]"><input type="radio" name="open" checked class="h-[13px] w-[13px] appearance-none rounded-full border border-[#0078d7] bg-[#0078d7] shadow-[inset_0_0_0_2px_#fff]"><span class="h-[23px] w-[111px] border border-dotted border-black leading-5">单击打开</span></label>
          <label class="ml-5 flex items-center gap-[3px] pb-1"><input type="radio" name="open" class="h-[13px] w-[13px] appearance-none rounded-full border border-[#333] bg-white">双击打开</label>
        </div>
      </fieldset>
      <label for="menu" class="mt-2">我的默认导航菜单：</label>
      <div class="relative mt-[3px] flex w-[296px]">
        <select id="menu" class="h-[23px] w-full appearance-none border border-[#a9a9ae] bg-white pb-[2px] pl-[17px] leading-5"><option>用户管理</option></select>
        <span class="pointer-events-none absolute right-0 flex h-[23px] w-[18px] items-center justify-center border border-[#a0a0a0] bg-[#e1e1e1]"><svg class="h-[6px] w-[9px]" viewBox="0 0 9 6"><path d="m.5.5 4 4 4-4" stroke="#444" fill="none"/></svg></span>
      </div>
    </div>
    <div class="my-[13px] mr-3 flex justify-end gap-[5px]">
      <button type="button" class="h-[26px] w-[95px] border border-[#adadad] bg-[#e1e1e1] pb-px pr-1">保存(<u>S</u>)</button>
      <button type="button" class="h-[26px] w-[95px] border border-[#adadad] bg-[#e1e1e1] pb-px pr-1">取消</button>
    </div>
  </form>

  <!-- callout arrows -->
  <svg class="pointer-events-none absolute left-0 top-0 h-[549px] w-[1065px]" viewBox="1 149 1065 549" fill="#f91bf9" stroke="#f91bf9" stroke-linejoin="round">
    <path d="M176 471 192 468 192 473 366 537 190 479 188 483z"/>
    <path d="M414 422 429 431 426 434 510 580 419 438 416 440z"/>
    <path d="M854 582 838 576 841 573 738 460 845 569 849 566z"/>
  </svg>
</main>

<footer class="flex h-[22px] shrink-0 items-center bg-[#a4373a] pl-2 text-white">
  <span>窗体视图</span>
  <span class="ml-auto mr-[19px]">数字</span>
  <button class="flex h-full w-[38px] items-center justify-center bg-[#8c2a2f]" aria-label="窗体视图"><svg class="h-[13px] w-[14px]" viewBox="0 0 14 13" stroke="#fff" fill="none"><path d="M.5.5h13v12H.5zM2 6.500h4M8 6.500h4M2 9.500h4M8 9.500h4"/><path d="M0 2h14" stroke-width="4"/></svg></button>
  <button class="flex h-full w-[38px] items-center justify-center" aria-label="布局视图"><svg class="h-[13px] w-[14px]" viewBox="0 0 14 13" stroke="#fff" fill="none"><path d="M.5.5h13v12H.5zM0 3.500h14M4.500 0v13M6 6.500h2M10 6.500h2M6 9.500h2M10 9.500h2"/></svg></button>
  <button class="mr-3 flex h-full w-[38px] items-center justify-center" aria-label="设计视图"><svg class="h-[14px] w-[14px]" viewBox="0 0 14 14" stroke="#fff" fill="none"><path d="M1 1v7h6zM6 8l7-7" stroke-width="1.500"/><path d="M1.500 10.500h12v3h-12zM4.500 11v1M7.500 11v1M10.500 11v1"/></svg></button>
</footer>
</body>
</html>
